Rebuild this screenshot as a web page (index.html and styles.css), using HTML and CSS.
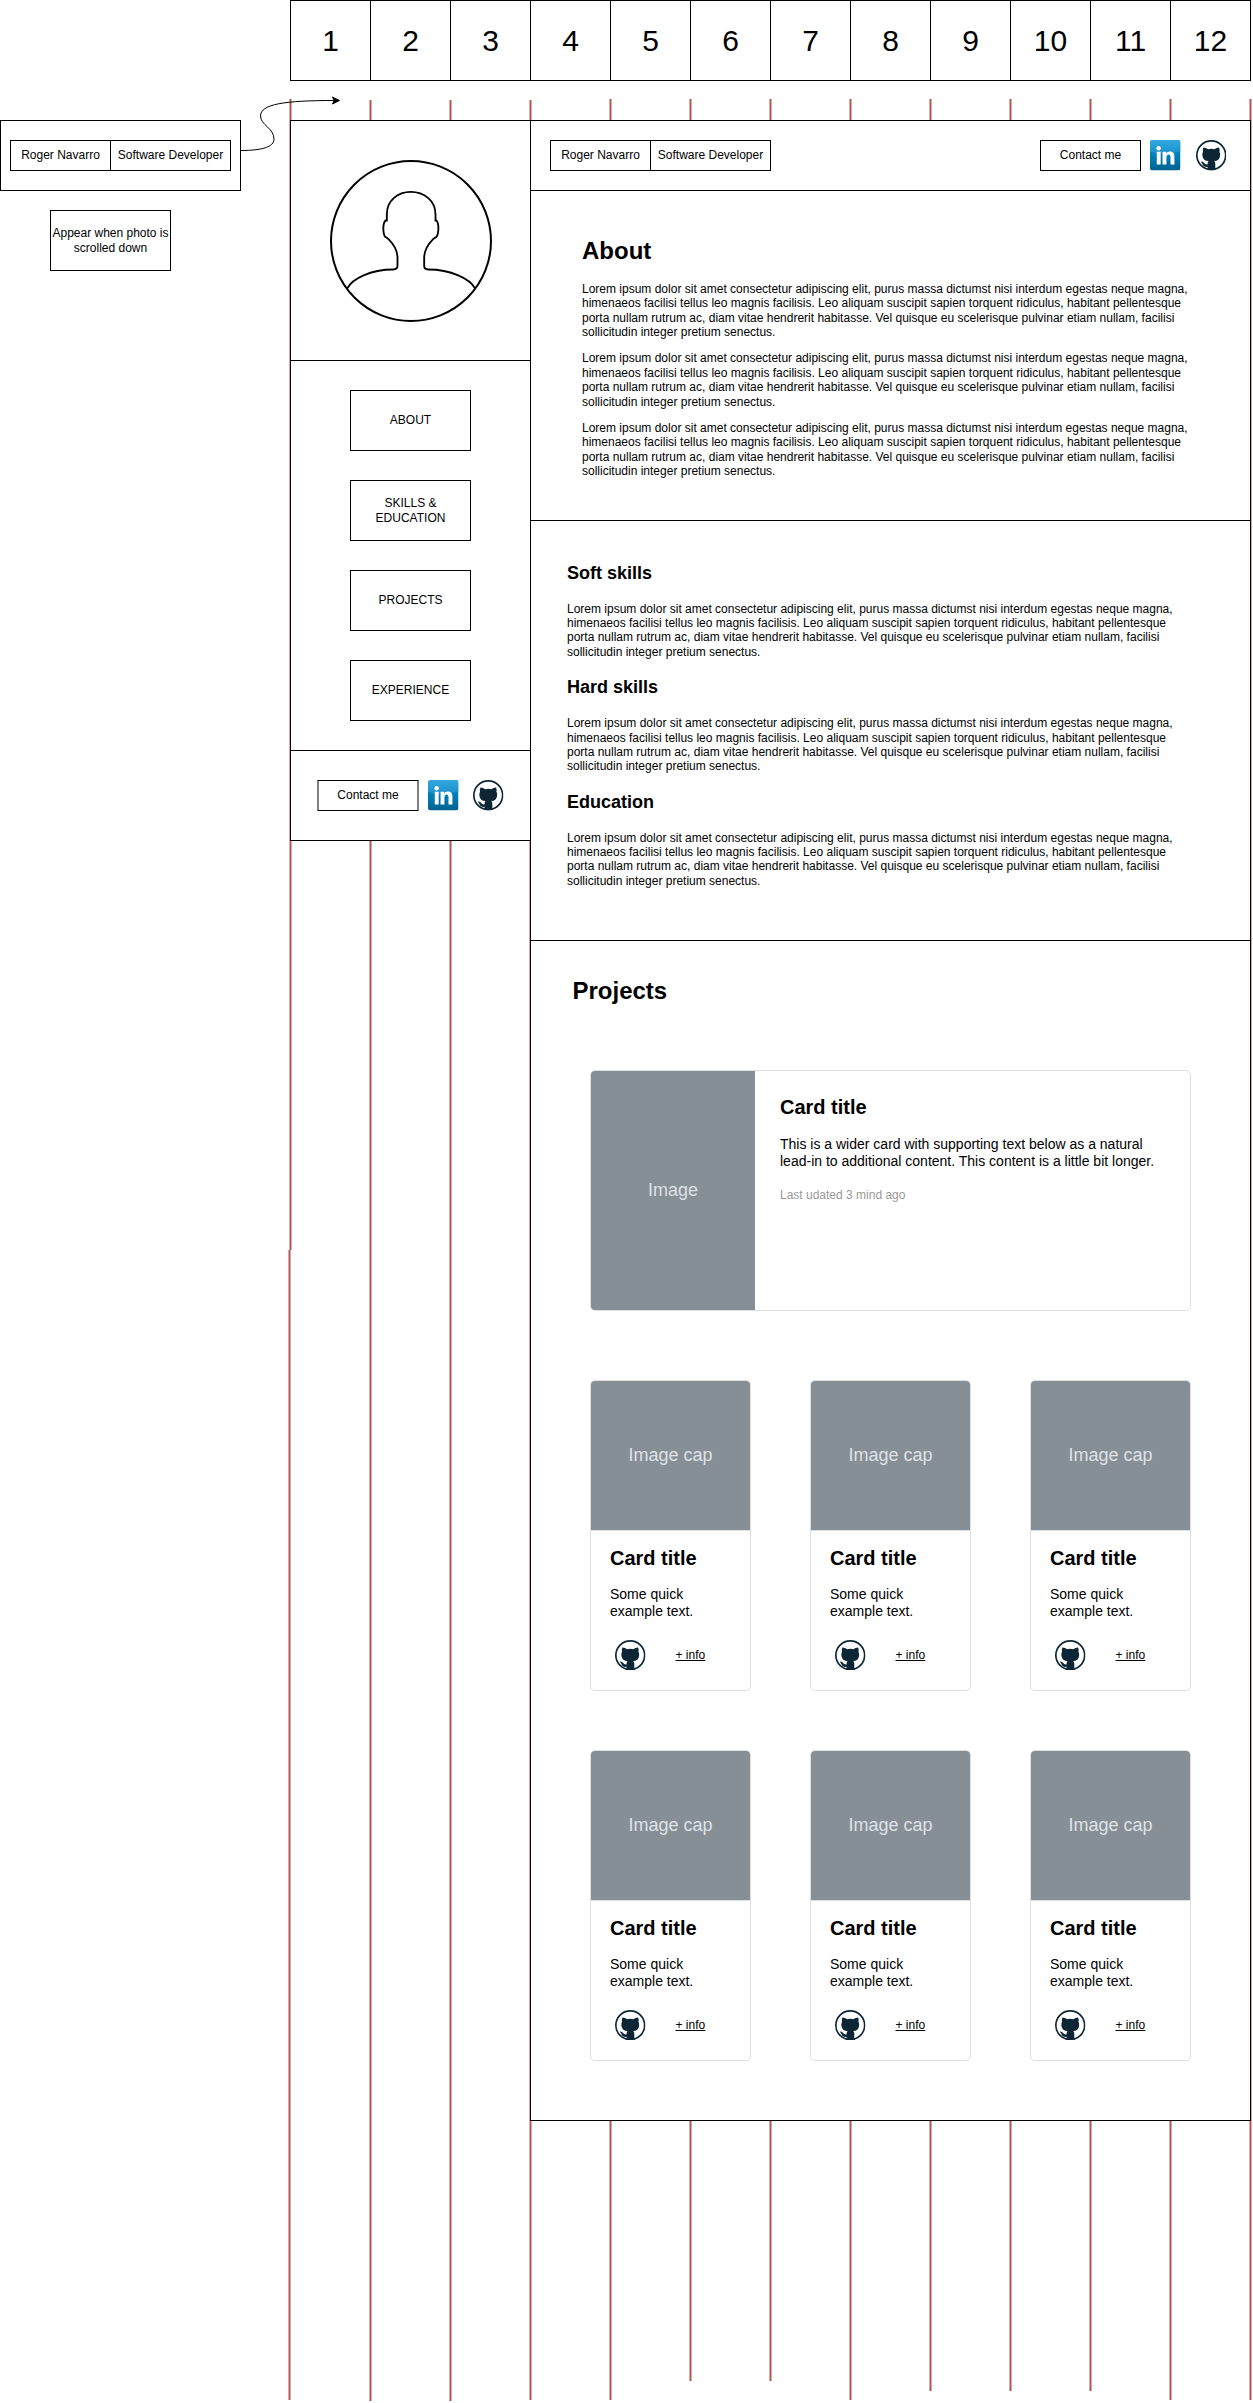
FILE: index.html
```html
<!DOCTYPE html>
<html lang="en">
<head>
<meta charset="utf-8">
<title>Portfolio wireframe</title>
<link rel="stylesheet" href="styles.css">
</head>
<body>
<svg class="defs" width="0" height="0" aria-hidden="true">
  <defs>
    <linearGradient id="li-top" x1="0" y1="0" x2="0" y2="1">
      <stop offset="0" stop-color="#33a8e0"/><stop offset="1" stop-color="#1a8fc8"/>
    </linearGradient>
    <linearGradient id="li-base" x1="0" y1="0" x2="0" y2="1">
      <stop offset="0" stop-color="#1a95d0"/><stop offset="0.45" stop-color="#0082be"/><stop offset="1" stop-color="#00618f"/>
    </linearGradient>
  </defs>
  <symbol id="linkedin" viewBox="0 0 90 90">
    <rect width="90" height="90" rx="8" fill="url(#li-base)"/>
    <path d="M0 38V8Q0 0 8 0H82Q90 0 90 8V32Q60 44 34 42Q14 41 0 34Z" fill="url(#li-top)"/>
    <g fill="#fff">
      <circle cx="25.500" cy="24.500" r="6.500"/>
      <path d="M20 35H31.500V72H20Z"/>
      <path d="M37 35H48V40Q51 34 58.500 34Q72 34 72 49V72H60.500V52Q60.500 43 54.500 43Q48.500 43 48.500 51V72H37Z"/>
    </g>
  </symbol>
  <symbol id="github" viewBox="0 0 90 90">
    <circle cx="45" cy="45" r="42.500" fill="#fff" stroke="#0d2636" stroke-width="5"/>
    <path fill="#0d2636" d="M22 22Q30 22 36 27Q45 25 54 27Q60 22 68 22Q71 28 69 34Q72 40 71 47Q69 61 54 62Q57 65 57 70V88Q45 91 34 88V79Q22 81 19 71Q17 66 14 64Q20 61 24 68Q27 73 34 72Q34 65 37 62Q21 61 19 47Q18 40 21 34Q19 28 22 22Z"/>
  </symbol>
</svg>

<div class="board">
  <svg class="guides" width="1253" height="2403" aria-hidden="true">
    <path d="M290.500 99V1250M289.500 1250V2400M370.500 100V2401M450.500 100V2401M530.500 100V2400M610.500 99V2400M690.500 99V2381M770.500 99V2381M850.500 99V2400M930.500 99V2391M1010.500 99V2391M1090.500 99V2391M1170.500 99V2400M1250.500 99V2400"/>
  </svg>

  <div class="columns">
    <div>1</div><div>2</div><div>3</div><div>4</div><div>5</div><div>6</div>
    <div>7</div><div>8</div><div>9</div><div>10</div><div>11</div><div>12</div>
  </div>

  <div class="layout">
    <aside class="notes">
      <div class="preview">
        <div class="identity"><span class="name">Roger Navarro</span><span class="role">Software Developer</span></div>
      </div>
      <p class="note">Appear when photo is<br>scrolled down</p>
    </aside>

    <div class="sidebar">
      <div class="photo">
        <svg width="164" height="164" viewBox="-2 -2 164 164" fill="none" stroke="#000" stroke-width="2">
          <circle cx="80" cy="80" r="80"/>
          <path transform="translate(-10.500 -10.500) scale(.33333)" stroke-width="5.500" d="M81 413C95 385 150 357 218 357Q231 357 231 346V322C231 303 222 284 204 266Q199 261 194 259C187 249 186 219 195 210H199V192C199 150 232 124 271 124C310 124 345 150 345 192V210H348C356 219 355 249 348 259Q343 261 338 266C320 284 311 303 311 322V346Q311 357 323 357C391 357 449 385 463 413"/>
        </svg>
      </div>
      <nav class="menu">
        <a>ABOUT</a>
        <a>SKILLS &amp;<br>EDUCATION</a>
        <a>PROJECTS</a>
        <a>EXPERIENCE</a>
      </nav>
      <div class="side-contact">
        <a class="contact">Contact me</a>
        <svg class="icon"><use href="#linkedin"/></svg>
        <svg class="icon"><use href="#github"/></svg>
      </div>
    </div>

    <main class="main">
      <header class="topbar">
        <div class="identity"><span class="name">Roger Navarro</span><span class="role">Software Developer</span></div>
        <div class="top-contact">
          <a class="contact">Contact me</a>
          <svg class="icon"><use href="#linkedin"/></svg>
          <svg class="icon"><use href="#github"/></svg>
        </div>
      </header>

      <section class="about">
        <h1>About</h1>
        <p>Lorem ipsum dolor sit amet consectetur adipiscing elit, purus massa dictumst nisi interdum egestas neque magna, himenaeos facilisi tellus leo magnis facilisis. Leo aliquam suscipit sapien torquent ridiculus, habitant pellentesque porta nullam rutrum ac, diam vitae hendrerit habitasse. Vel quisque eu scelerisque pulvinar etiam nullam, facilisi sollicitudin integer pretium senectus.</p>
        <p>Lorem ipsum dolor sit amet consectetur adipiscing elit, purus massa dictumst nisi interdum egestas neque magna, himenaeos facilisi tellus leo magnis facilisis. Leo aliquam suscipit sapien torquent ridiculus, habitant pellentesque porta nullam rutrum ac, diam vitae hendrerit habitasse. Vel quisque eu scelerisque pulvinar etiam nullam, facilisi sollicitudin integer pretium senectus.</p>
        <p>Lorem ipsum dolor sit amet consectetur adipiscing elit, purus massa dictumst nisi interdum egestas neque magna, himenaeos facilisi tellus leo magnis facilisis. Leo aliquam suscipit sapien torquent ridiculus, habitant pellentesque porta nullam rutrum ac, diam vitae hendrerit habitasse. Vel quisque eu scelerisque pulvinar etiam nullam, facilisi sollicitudin integer pretium senectus.</p>
      </section>

      <section class="skills">
        <h2>Soft skills</h2>
        <p>Lorem ipsum dolor sit amet consectetur adipiscing elit, purus massa dictumst nisi interdum egestas neque magna, himenaeos facilisi tellus leo magnis facilisis. Leo aliquam suscipit sapien torquent ridiculus, habitant pellentesque porta nullam rutrum ac, diam vitae hendrerit habitasse. Vel quisque eu scelerisque pulvinar etiam nullam, facilisi sollicitudin integer pretium senectus.</p>
        <h2>Hard skills</h2>
        <p>Lorem ipsum dolor sit amet consectetur adipiscing elit, purus massa dictumst nisi interdum egestas neque magna, himenaeos facilisi tellus leo magnis facilisis. Leo aliquam suscipit sapien torquent ridiculus, habitant pellentesque porta nullam rutrum ac, diam vitae hendrerit habitasse. Vel quisque eu scelerisque pulvinar etiam nullam, facilisi sollicitudin integer pretium senectus.</p>
        <h2>Education</h2>
        <p>Lorem ipsum dolor sit amet consectetur adipiscing elit, purus massa dictumst nisi interdum egestas neque magna, himenaeos facilisi tellus leo magnis facilisis. Leo aliquam suscipit sapien torquent ridiculus, habitant pellentesque porta nullam rutrum ac, diam vitae hendrerit habitasse. Vel quisque eu scelerisque pulvinar etiam nullam, facilisi sollicitudin integer pretium senectus.</p>
      </section>

      <section class="projects">
        <h1>Projects</h1>
        <article class="feature">
          <div class="image">Image</div>
          <div class="feature-body">
            <h3>Card title</h3>
            <p>This is a wider card with supporting text below as a natural<br>lead-in to additional content. This content is a little bit longer.</p>
            <small>Last udated 3 mind ago</small>
          </div>
        </article>
        <div class="cards">
          <article class="card">
            <div class="image">Image cap</div>
            <div class="card-body"><h3>Card title</h3><p>Some quick<br>example text.</p>
              <div class="actions"><svg class="icon"><use href="#github"/></svg><a>+ info</a></div></div>
          </article>
          <article class="card">
            <div class="image">Image cap</div>
            <div class="card-body"><h3>Card title</h3><p>Some quick<br>example text.</p>
              <div class="actions"><svg class="icon"><use href="#github"/></svg><a>+ info</a></div></div>
          </article>
          <article class="card">
            <div class="image">Image cap</div>
            <div class="card-body"><h3>Card title</h3><p>Some quick<br>example text.</p>
              <div class="actions"><svg class="icon"><use href="#github"/></svg><a>+ info</a></div></div>
          </article>
          <article class="card">
            <div class="image">Image cap</div>
            <div class="card-body"><h3>Card title</h3><p>Some quick<br>example text.</p>
              <div class="actions"><svg class="icon"><use href="#github"/></svg><a>+ info</a></div></div>
          </article>
          <article class="card">
            <div class="image">Image cap</div>
            <div class="card-body"><h3>Card title</h3><p>Some quick<br>example text.</p>
              <div class="actions"><svg class="icon"><use href="#github"/></svg><a>+ info</a></div></div>
          </article>
          <article class="card">
            <div class="image">Image cap</div>
            <div class="card-body"><h3>Card title</h3><p>Some quick<br>example text.</p>
              <div class="actions"><svg class="icon"><use href="#github"/></svg><a>+ info</a></div></div>
          </article>
        </div>
      </section>
    </main>
  </div>

  <svg class="connector" width="110" height="64" viewBox="236 92 110 64" aria-hidden="true">
    <path d="M241 150.500C262 150.500 274 147 274 139C274 128 260.500 125 260.500 116C260.500 104 285 100.500 334 100.500" fill="none" stroke="#000"/>
    <path d="M339.500 100.500L332.500 104L334.200 100.500L332.500 97Z" stroke="#000"/>
  </svg>
</div>
</body>
</html>
```

FILE: styles.css
```css
* { box-sizing: border-box; }

body {
  margin: 0;
  background: #fff;
  color: #000;
  font: 12px/14.4px "Liberation Sans", Arial, Helvetica, sans-serif;
}

h1, h2, h3, p { margin: 0; }
h1 { font-size: 24px; line-height: 28.8px; }
h2 { font-size: 18px; line-height: 21.6px; }
h3 { font-size: 20px; line-height: 24px; }

.defs { position: absolute; }

.board {
  position: relative;
  isolation: isolate;
  width: 1253px;
  height: 2403px;
  overflow: hidden;
}

/* 12-column guide lines behind the panels */
.guides {
  position: absolute;
  inset: 0;
  z-index: -1;
  fill: none;
  stroke: #b85450;
  stroke-width: 2;
}

/* arrow drawn over the board */
.connector {
  position: absolute;
  left: 236px;
  top: 92px;
}

.columns {
  display: flex;
  margin-left: 290px;
}
.columns div {
  display: flex;
  flex: none;
  align-items: center;
  justify-content: center;
  width: 81px;
  height: 81px;
  margin-right: -1px;
  border: 1px solid #000;
  font-size: 30px;
  line-height: 36px;
}

.layout {
  display: flex;
  align-items: flex-start;
  margin-top: 39px;
}

.notes { flex: none; width: 290px; }
.preview {
  width: 241px;
  height: 71px;
  padding: 19px 9px;
  border: 1px solid #000;
}
.note {
  display: flex;
  align-items: center;
  justify-content: center;
  width: 121px;
  height: 61px;
  margin: 19px 0 0 50px;
  border: 1px solid #000;
  text-align: center;
  white-space: nowrap;
}

.identity { display: flex; }
.identity span,
.contact {
  display: flex;
  align-items: center;
  justify-content: center;
  height: 31px;
  border: 1px solid #000;
  white-space: nowrap;
}
.identity .name { width: 101px; }
.identity .role { width: 121px; margin-left: -1px; }
.contact { width: 101px; }
.icon { display: block; flex: none; width: 30.5px; height: 30.5px; }

.sidebar {
  flex: none;
  width: 241px;
  height: 721px;
  border: 1px solid #000;
  background: #fff;
}
.photo {
  display: flex;
  align-items: center;
  justify-content: center;
  height: 240px;
  border-bottom: 1px solid #000;
}
.menu {
  display: flex;
  flex-direction: column;
  align-items: center;
  gap: 29px;
  height: 390px;
  padding-top: 29px;
  border-bottom: 1px solid #000;
}
.menu a {
  display: flex;
  align-items: center;
  justify-content: center;
  width: 121px;
  height: 61px;
  border: 1px solid #000;
  text-align: center;
}
.side-contact {
  display: flex;
  padding: 29px 0 0 26px;
}
.side-contact .contact {
  width: 102px;
  border-width: 1px 2px;
  border-color: #000 #808080;
}
.side-contact .icon:nth-child(2) { margin-left: 9px; }
.side-contact .icon:nth-child(3) { margin-left: 14.5px; }

.main {
  flex: none;
  width: 721px;
  height: 2001px;
  margin-left: -1px;
  border: 1px solid #000;
  background: #fff;
}
.topbar {
  display: flex;
  justify-content: space-between;
  height: 70px;
  padding: 19px 24px 0 19px;
  border-bottom: 1px solid #000;
}
.top-contact { display: flex; }
.top-contact .icon:nth-child(2) { margin-left: 9px; }
.top-contact .icon:nth-child(3) { margin-left: 15px; }

.about {
  height: 330px;
  padding: 46px 50px 0 51px;
  border-bottom: 1px solid #000;
}
.about h1 { margin-bottom: 15.9px; }
.about p { margin-bottom: 12px; }

.skills {
  height: 420px;
  padding: 41.7px 65px 0 36px;
  border-bottom: 1px solid #000;
}
.skills h2 { margin-bottom: 17.4px; }
.skills p { margin-bottom: 17.85px; }
.skills p:last-child { margin-bottom: 0; }

.projects { padding: 36px 59px 0; }
.projects h1 { margin: 0 0 64.2px -17.500px; }

.image {
  display: flex;
  align-items: center;
  justify-content: center;
  background: #868e96;
  color: #dee2e6;
  font-size: 18px;
  line-height: 21.6px;
}

.feature {
  display: flex;
  width: 601px;
  height: 241px;
  margin-bottom: 69px;
  border: 1px solid #dfdfdf;
  border-radius: 5px;
  overflow: hidden;
}
.feature .image { width: 164px; }
.feature-body { padding: 24px 0 0 25px; white-space: nowrap; }
.feature-body p { margin: 17px 0 18px; font-size: 14px; line-height: 16.8px; }
.feature-body small { display: block; color: #999; font-size: 12px; }

.cards {
  display: grid;
  grid-template-columns: repeat(3, 161px);
  gap: 59px;
}
.card {
  height: 311px;
  border: 1px solid #dfdfdf;
  border-radius: 5px;
  overflow: hidden;
}
.card .image { height: 149px; }
.card-body {
  height: 160px;
  padding: 15px 0 0 19px;
  border-top: 1px solid #dfdfdf;
}
.card-body p { margin-top: 16px; font-size: 14px; line-height: 16.8px; }
.actions {
  display: flex;
  align-items: center;
  margin-top: 20.4px;
}
.actions .icon { margin-left: 5px; }
.actions a { margin-left: 30px; padding-top: .6px; text-decoration: underline; }
```
